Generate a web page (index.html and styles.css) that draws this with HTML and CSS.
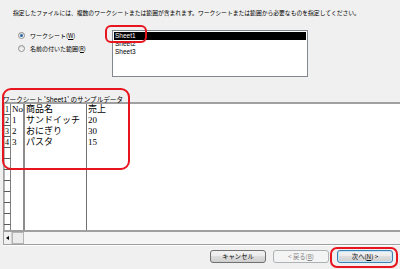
FILE: index.html
```html
<!DOCTYPE html>
<html lang="ja">
<head>
    <meta charset="UTF-8">
    <title>テキスト ファイル ウィザード</title>
    <link rel="stylesheet" href="styles.css">
</head>
<body>

<div class="dialog">
    <!-- Intro -->
    <p class="intro">指定したファイルには、複数のワークシートまたは範囲が含まれます。ワークシートまたは範囲から必要なものを指定してください。</p>

    <!-- Sheet / range choice -->
    <div class="source">
        <div class="choices">
            <label class="choice"><span class="radio checked"></span><span>ワークシート(<u>W</u>)</span></label>
            <label class="choice"><span class="radio"></span><span>名前の付いた範囲(<u>R</u>)</span></label>
        </div>
        <ul class="sheets">
            <li class="selected">Sheet1</li>
            <li>Sheet2</li>
            <li>Sheet3</li>
        </ul>
    </div>

    <!-- Sample data -->
    <div class="sample-title">ワークシート 'Sheet1' のサンプルデータ</div>
    <div class="preview">
        <div class="grid">
            <span class="rn">1</span><span class="c no">No</span><span class="c name">商品名</span><span class="c">売上</span>
            <span class="rn">2</span><span class="c no">1</span><span class="c name">サンドイッチ</span><span class="c">20</span>
            <span class="rn">3</span><span class="c no">2</span><span class="c name">おにぎり</span><span class="c">30</span>
            <span class="rn">4</span><span class="c no">3</span><span class="c name">パスタ</span><span class="c">15</span>
            <span class="rn"></span><span class="c no"></span><span class="c name"></span><span class="c"></span>
            <span class="rn"></span><span class="c no"></span><span class="c name"></span><span class="c"></span>
            <span class="rn"></span><span class="c no"></span><span class="c name"></span><span class="c"></span>
            <span class="rn"></span><span class="c no"></span><span class="c name"></span><span class="c"></span>
            <span class="rn"></span><span class="c no"></span><span class="c name"></span><span class="c"></span>
            <span class="rn"></span><span class="c no"></span><span class="c name"></span><span class="c"></span>
            <span class="rn"></span><span class="c no"></span><span class="c name"></span><span class="c"></span>
            <span class="rn"></span><span class="c no"></span><span class="c name"></span><span class="c"></span>
        </div>
        <div class="hscroll">
            <span class="arrow"></span>
            <span class="thumb"></span>
        </div>
    </div>
    <div class="rule"></div>

    <!-- Wizard buttons -->
    <div class="buttons">
        <button class="btn">キャンセル</button>
        <button class="btn" disabled>&lt; 戻る(<u>B</u>)</button>
        <button class="btn btn-default">次へ(<u>N</u>) &gt;</button>
    </div>

    <!-- Red annotation marks -->
    <span class="mark mark-sheet"></span>
    <span class="mark mark-data"></span>
    <span class="mark mark-next"></span>
</div>

</body>
</html>
```

FILE: styles.css
```css
/* Basic reset */
* {
    margin: 0;
    padding: 0;
    box-sizing: border-box;
}
body {
    width: 400px;
    height: 269px;
    overflow: hidden;
    background-color: #f0f0f0;
    font-family: "Noto Sans CJK JP", sans-serif;
    color: #000;
}
.dialog {
    position: relative;
    height: 269px;
}

/* Intro text */
.intro {
    height: 30px;
    padding: 9px 0 0 13px;
    font-size: 5.8px;
    line-height: 7px;
    white-space: nowrap;
}

/* Sheet / range choice */
.source {
    display: flex;
    height: 47px;
}
.choices {
    width: 112px;
    padding-left: 18px;
    margin-top: -1px;
}
.choice {
    display: flex;
    align-items: center;
    gap: 5px;
    height: 13px;
    font-size: 6px;
    white-space: nowrap;
}
.radio {
    position: relative;
    width: 7px;
    height: 7px;
    border: 1px solid #8e8f8f;
    border-radius: 50%;
    background: linear-gradient(#dcdcdc, #fdfdfd);
}
.radio.checked::after {
    content: "";
    position: absolute;
    top: 1px;
    left: 1px;
    width: 3px;
    height: 3px;
    border-radius: 50%;
    background-color: #2a63a8;
}
.sheets {
    width: 196px;
    height: 47px;
    padding: 1px;
    list-style: none;
    background-color: #fff;
    border: 1px solid #828790;
    font-family: "Liberation Sans", sans-serif;
    font-size: 6.5px;
}
.sheets li {
    height: 8px;
    line-height: 8px;
    padding-left: 1px;
}
.sheets li.selected {
    background-color: #000;
    color: #fff;
}

/* Sample data */
.sample-title {
    height: 6px;
    margin-top: 19px;
    padding-left: 3px;
    font-size: 6.6px;
    line-height: 6px;
    white-space: nowrap;
}
.preview {
    margin-left: 3px;
    background-color: #fff;
    border-top: 2px solid #a0a0a0;
    border-left: 1px solid #a0a0a0;
}
.grid {
    display: grid;
    grid-template-columns: 7px 14px 62px 1fr;
    grid-auto-rows: 11px;
    height: 128px;
    overflow: hidden;
    border-bottom: 2px solid #a0a0a0;
    font-family: "Liberation Serif", "Noto Sans CJK JP", serif;
    font-size: 9px;
    line-height: 11px;
}
.rn {
    font-size: 8px;
    text-align: center;
    background-color: #fff;
    border-right: 1px solid #808080;
    border-bottom: 1px solid #5a5a5a;
    box-shadow: inset 1px 0 0 #b8b8b8;
}
.c {
    padding-left: 1px;
    white-space: nowrap;
}
.c.no {
    border-right: 2px solid #8c8c8c;
}
.c.name {
    border-right: 1px solid #707070;
}

/* Horizontal scrollbar */
.hscroll {
    display: flex;
    height: 12px;
    background-color: #f5f5f5;
}
.arrow {
    position: relative;
    width: 8px;
    border-right: 1px solid #d0d0d0;
    background-color: #f0f0f0;
}
.arrow::after {
    content: "";
    position: absolute;
    top: 4px;
    left: 2px;
    border-top: 2px solid transparent;
    border-bottom: 2px solid transparent;
    border-right: 3px solid #000;
}
.thumb {
    width: 12px;
    border: 1px solid #b5b5b5;
    background-color: #ececec;
}
.rule {
    margin-left: 3px;
    border-top: 1px solid #a0a0a0;
    border-bottom: 1px solid #fff;
}

/* Wizard buttons */
.buttons {
    display: flex;
    justify-content: flex-end;
    gap: 7px;
    margin-top: 4px;
    padding-right: 7px;
}
.btn {
    width: 56px;
    height: 13px;
    font-family: "Noto Sans CJK JP", sans-serif;
    font-size: 6.3px;
    line-height: 11px;
    color: #000;
    border: 1px solid #707070;
    border-radius: 3px;
    background: linear-gradient(#f2f2f2, #ebebeb 50%, #dddddd 50%, #cfcfcf);
}
.btn:disabled {
    color: #838383;
    border-color: #adb2b5;
    background: #f4f4f4;
}
.btn-default {
    margin-left: 1px;
    border-color: #3c7fb1;
    box-shadow: inset 0 0 0 1px #c6e6f8;
}

/* Red annotation marks */
.mark {
    position: absolute;
    border: 2px solid #e8141e;
    border-radius: 6px;
}
.mark-sheet {
    left: 105px;
    top: 25px;
    width: 42px;
    height: 18px;
}
.mark-data {
    left: 2px;
    top: 88px;
    width: 128px;
    height: 82px;
    border-radius: 9px;
}
.mark-next {
    left: 330px;
    top: 247px;
    width: 68px;
    height: 21px;
    border-radius: 7px;
}
```
